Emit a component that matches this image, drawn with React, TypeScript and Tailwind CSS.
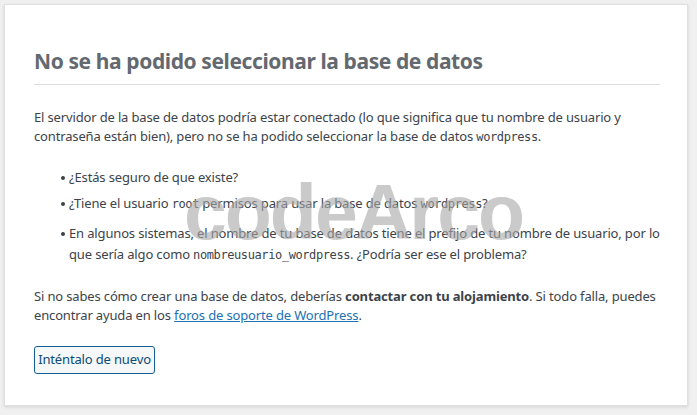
import React from "react";

const mono = { fontFamily: "'DejaVu Sans Mono', 'Liberation Mono', monospace" };

function Code({ children }: { children: React.ReactNode }) {
  return (
    <code className="text-[12px] tracking-[-0.4px]" style={mono}>
      {children}
    </code>
  );
}

function Bullet({ className = "", children }: { className?: string; children: React.ReactNode }) {
  return (
    <li className={`flex ${className}`}>
      <span className="mr-[4px] mt-[9px] h-[4px] w-[4px] shrink-0 rounded-full bg-[#3c434a]" />
      <div>{children}</div>
    </li>
  );
}

export default function App() {
  return (
    <div
      className="min-h-[415px] w-[697px] bg-[#f0f0f1] p-[4px] pr-[9px] pb-[9px] text-[#3c434a]"
      style={{ fontFamily: "'Noto Sans', 'Open Sans', sans-serif" }}
    >
      <div className="relative h-[402px] border border-[#e0e0e0] bg-white pl-[29px] pr-[27px] pt-[42px] shadow-[0_1px_3px_rgba(0,0,0,0.13)]">
        <h1 className="border-b border-[#dcdcde] pb-[9px] text-[21px] font-bold leading-[28px] tracking-[-0.4px] text-[#646970]">
          No se ha podido seleccionar la base de datos
        </h1>
        <div className="text-[13px] tracking-[-0.15px]">
          <p className="mt-[23px] leading-[19px]">
            El servidor de la base de datos podría estar conectado (lo que significa que tu nombre de usuario y
            contraseña están bien), pero no se ha podido seleccionar la base de datos <Code>wordpress</Code>.
          </p>
          <ul className="mt-[20px] pl-[27px] leading-[21px]">
            <Bullet>¿Estás seguro de que existe?</Bullet>
            <Bullet className="mt-[5px]">
              ¿Tiene el usuario <Code>root</Code> permisos para usar la base de datos <Code>wordpress</Code>?
            </Bullet>
            <Bullet className="mt-[8px]">
              En algunos sistemas, el nombre de tu base de datos tiene el prefijo de tu nombre de usuario, por lo
              que sería algo como <Code>nombreusuario_wordpress</Code>. ¿Podría ser ese el problema?
            </Bullet>
          </ul>
          <p className="mt-[21px] leading-[19px]">
            Si no sabes cómo crear una base de datos, deberías <strong>contactar con tu alojamiento</strong>. Si
            todo falla, puedes encontrar ayuda en los{" "}
            <a href="#" className="text-[#2271b1] underline">
              foros de soporte de WordPress
            </a>
            .
          </p>
          <button className="mt-[21px] h-[28px] w-[121px] rounded-[3px] border border-[#135e96] bg-[#f6f7f7] text-center text-[#0a4b78]">
            Inténtalo de nuevo
          </button>
        </div>
        <div
          className="pointer-events-none absolute left-[179px] top-[169px] select-none text-[77px] font-bold leading-none tracking-[-2px] text-[#a8a8a8] opacity-60"
          style={{ fontFamily: "'Liberation Sans', Arial, sans-serif" }}
        >
          codeArco
        </div>
      </div>
    </div>
  );
}
